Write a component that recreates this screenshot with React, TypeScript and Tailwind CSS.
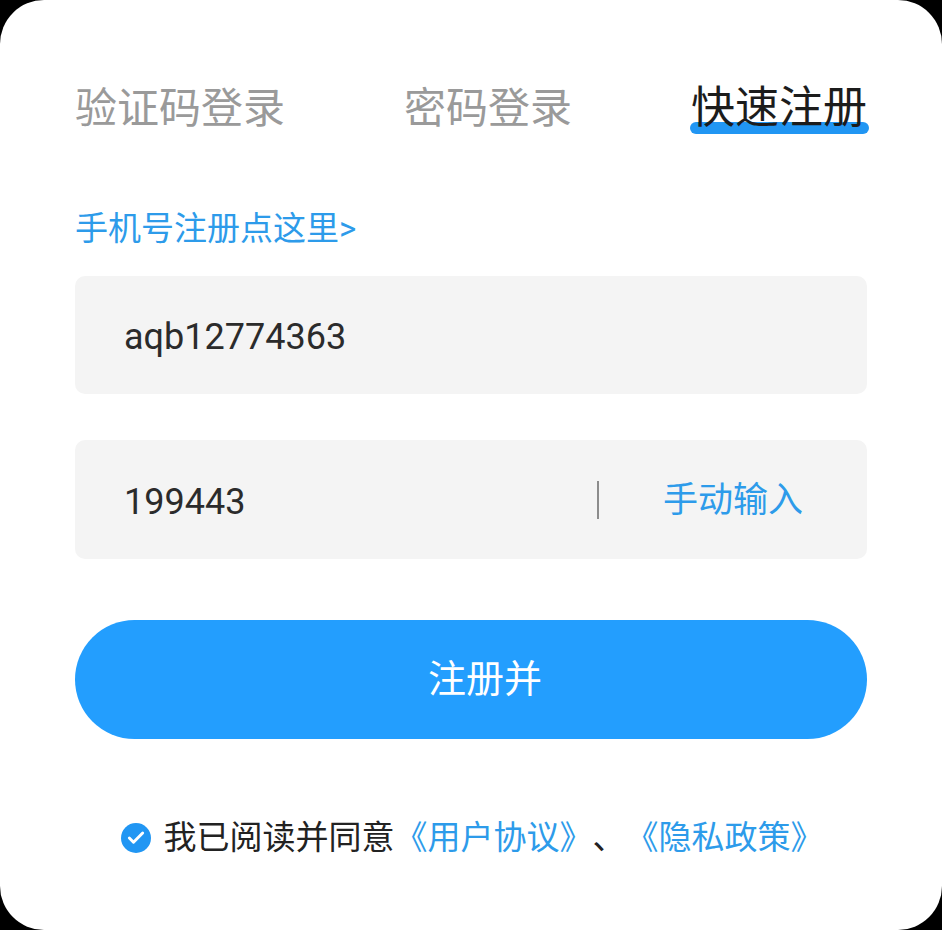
import { Check } from "lucide-react";

const cjk = "font-['Roboto','Noto_Sans_CJK_SC',sans-serif]";

const Tab = ({ label, active }: { label: string; active?: boolean }) => {
  if (!active) {
    return <span className="text-[42px] leading-none text-[#9a9a9a]">{label}</span>;
  }
  return (
    <span className="relative inline-block text-[44px] leading-none text-[#1c1c1c]">
      {/* underline sits behind the glyphs */}
      <span className="absolute -left-[1px] -right-[2px] bottom-[-4px] h-[12px] rounded-full bg-[#2196f3]" />
      <span className="relative">{label}</span>
    </span>
  );
};

export default function App() {
  return (
    <div className={`h-[930px] w-[942px] bg-black ${cjk}`}>
      <div className="flex h-full flex-col rounded-[44px] bg-white px-[75px]">
        {/* Tabs */}
        <div className="mt-[86px] flex items-end justify-between">
          <Tab label="验证码登录" />
          <Tab label="密码登录" />
          <Tab label="快速注册" active />
        </div>

        {/* Phone link */}
        <div className="mt-[82px] text-[33px] leading-none text-[#2d9bea]">手机号注册点这里&gt;</div>

        {/* Account input */}
        <div className="mt-[31px] flex h-[118px] items-center rounded-[10px] bg-[#f4f4f4] pl-[49px]">
          <span className="pt-[4px] text-[36px] text-[#2b2b2b]">aqb12774363</span>
        </div>

        {/* Code input */}
        <div className="mt-[46px] flex h-[119px] items-center rounded-[10px] bg-[#f4f4f4] pl-[49px] pr-[64px]">
          <span className="flex-1 pt-[4px] text-[36px] text-[#2b2b2b]">199443</span>
          <span className="h-[38px] w-[2px] bg-[#8c8c8c]" />
          <span className="ml-[64px] pt-[4px] text-[35px] text-[#2d9bea]">手动输入</span>
        </div>

        {/* Submit */}
        <button className="mt-[61px] flex h-[119px] items-center justify-center rounded-full bg-[#239efe] pl-[28px] text-[38px] text-white">
          注册并
        </button>

        {/* Agreement */}
        <div className="mt-[82px] flex items-center justify-center pl-[2px] text-[33px] leading-none">
          <span className="mr-[13px] flex h-[30px] w-[30px] items-center justify-center rounded-full bg-[#2196f3]">
            <Check size={20} strokeWidth={3.5} color="white" />
          </span>
          <span className="text-[#222]">我已阅读并同意</span>
          <span className="text-[#2d9bea]">《用户协议》</span>
          <span className="text-[#222]">、</span>
          <span className="text-[#2d9bea]">《隐私政策》</span>
        </div>
      </div>
    </div>
  );
}
